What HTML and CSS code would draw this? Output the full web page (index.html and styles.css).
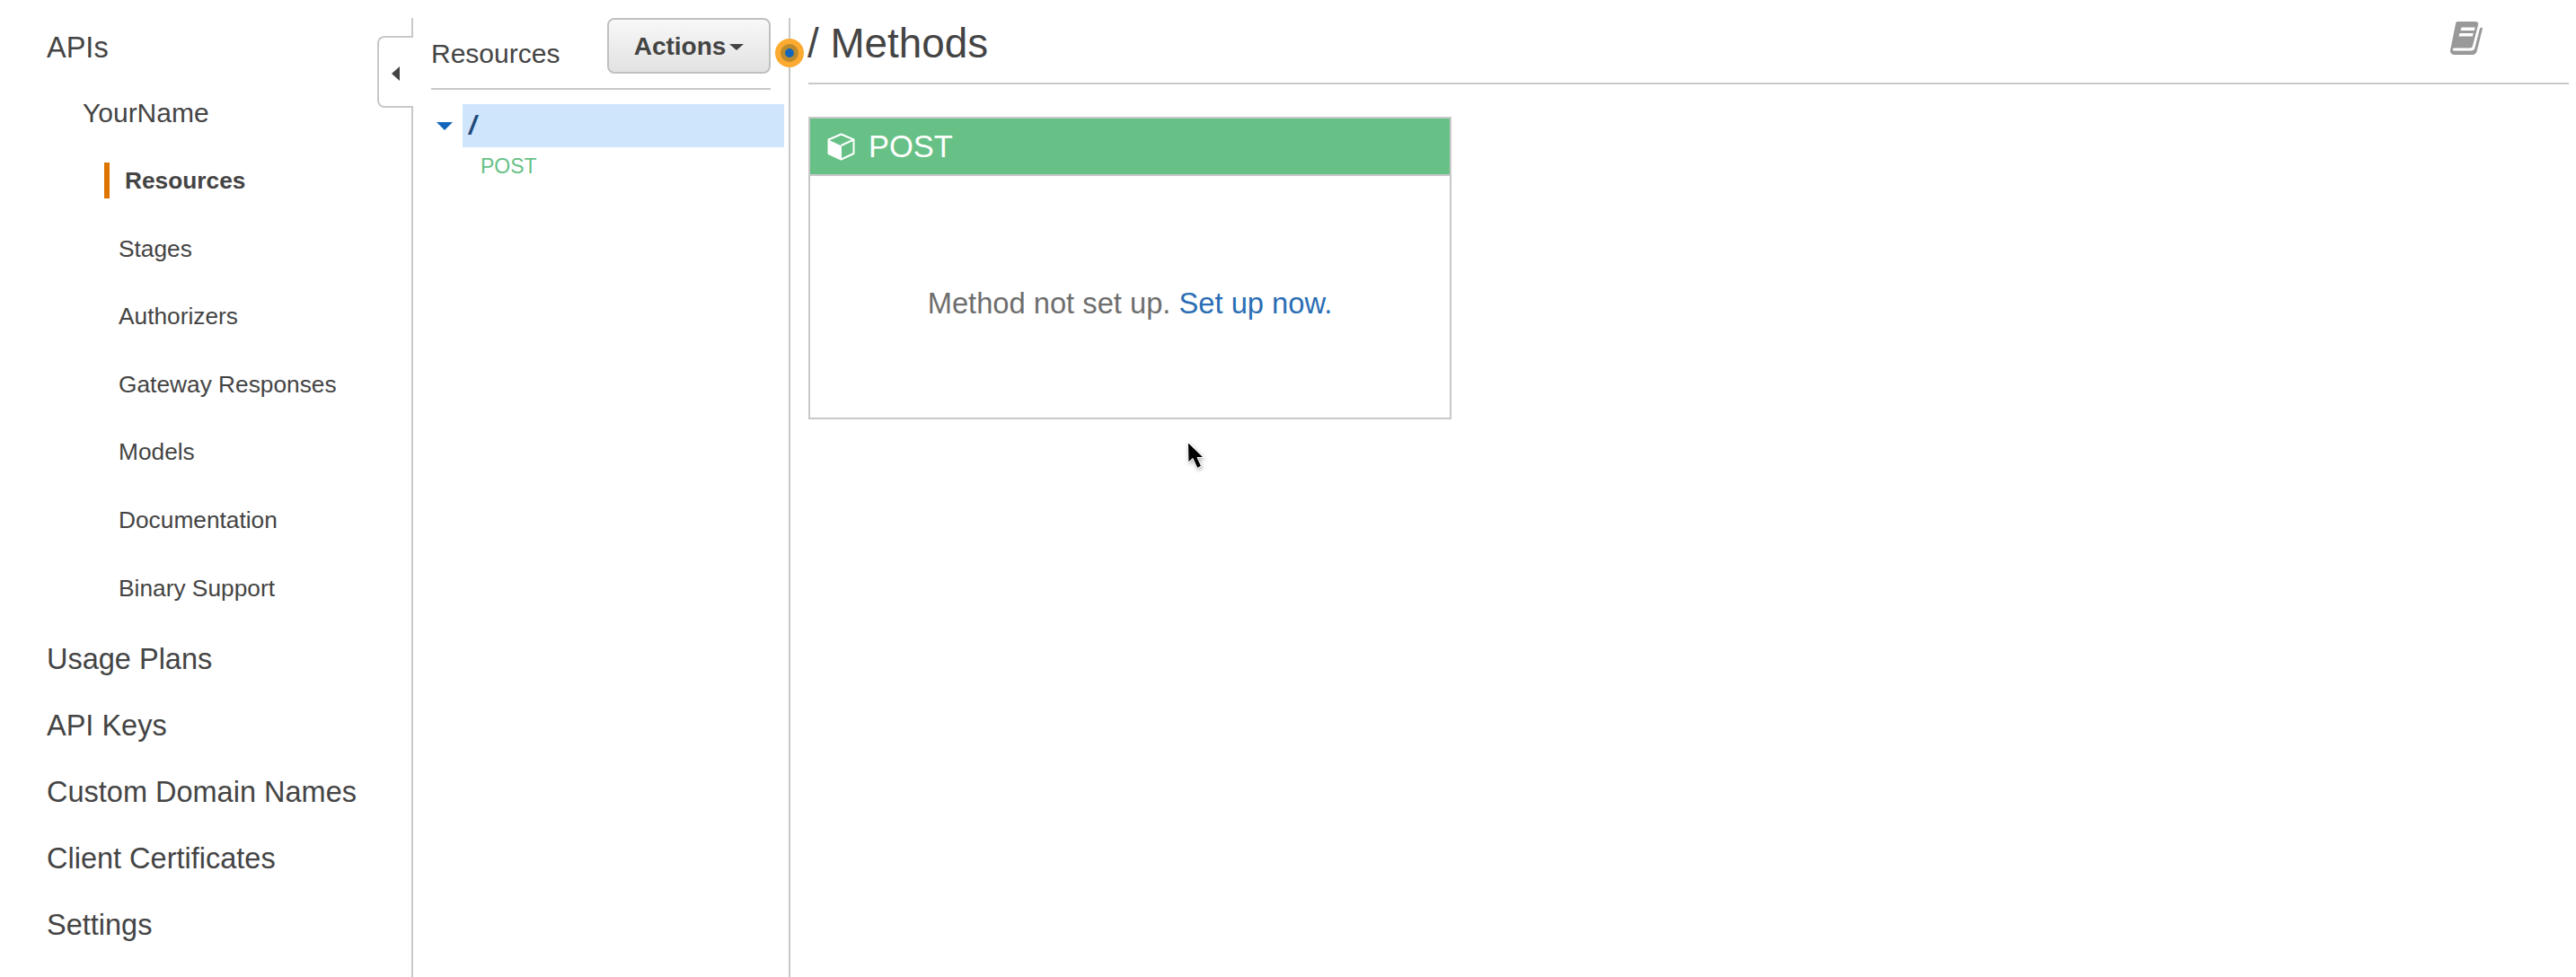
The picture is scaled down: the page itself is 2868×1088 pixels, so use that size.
FILE: index.html
```html
<!DOCTYPE html>
<html>
<head>
<title>Resources</title>
<meta charset="utf-8">
<link rel="stylesheet" href="styles.css">
</head>
<body>

<div class="page">

	<!-- left nav -->
	<nav class="nav">
		<a class="top first">APIs</a>
		<a class="api">YourName</a>
		<ul class="sub">
			<li class="active">Resources</li>
			<li>Stages</li>
			<li>Authorizers</li>
			<li>Gateway Responses</li>
			<li>Models</li>
			<li>Documentation</li>
			<li>Binary Support</li>
		</ul>
		<a class="top">Usage Plans</a>
		<a class="top">API Keys</a>
		<a class="top">Custom Domain Names</a>
		<a class="top">Client Certificates</a>
		<a class="top">Settings</a>
		<div class="toggle"><span class="arrow-left"></span></div>
	</nav>

	<!-- resource tree -->
	<section class="tree">
		<div class="tree-head">
			<span class="tree-title">Resources</span>
			<button class="actions">Actions<span class="caret"></span></button>
		</div>
		<div class="tree-row">
			<span class="arrow-down"></span>
			<span class="tree-path">/</span>
		</div>
		<div class="tree-method">POST</div>
		<div class="drag"><span></span></div>
	</section>

	<!-- methods -->
	<main class="main">
		<div class="main-head">
			<h1>/ Methods</h1>
			<svg class="book" width="42" height="40" viewBox="0 0 42 40">
				<path fill="#999" d="M9 1h20c2.500 0 3.500 1.500 3 4l-6 23c-.5 1.800-1.500 2.500-3.500 2.500H6c-2 0-3 1.500-2 2.500.5.500 1.500.500 2.500.500h18c2 0 3.200-1 3.800-3L34 8.500c.4-.4 1.500-.6 2.500-.8.400 0 .6.300.5.800l-6.200 25c-.6 2.500-2.300 4.500-5.300 4.500H6c-3.500 0-5.500-2.500-5-5.500.1-.8.300-1.500.6-2.300L7 3.500C7.300 2 8 1 9 1z"/>
				<path fill="#fff" d="M13.500 7.500h15.200l-1 3.500H12.500zM11.500 14h15.200l-1 3.500H10.500z"/>
			</svg>
		</div>
		<div class="card">
			<div class="card-head">
				<svg class="cube" width="31" height="31" viewBox="0 0 31 31">
					<path fill="none" stroke="#fff" stroke-width="2" stroke-linejoin="round" d="M15.500 1.500 29.500 7.500v15.500L15.500 29.500 1.500 23V7.500zM15.500 14 29.500 7.500"/>
					<path fill="#fff" d="M1 7.500 16 14.500V30L1 23z"/>
				</svg>
				POST
			</div>
			<div class="card-body">Method not set up. <a>Set up now.</a></div>
		</div>
	</main>
</div>

<svg class="cursor" width="22" height="32" viewBox="0 0 22 32">
	<path fill="#000" stroke="#fff" stroke-width="1" d="M1.500 1.500 2 24l5-4.500L12 30.500l4.500-2.500-4.500-9.500h7z"/>
</svg>

</body>
</html>
```

FILE: styles.css
```css
* {
	box-sizing: border-box;
}

html, body {
	margin: 0;
	height: 100%;
	overflow: hidden;
	background-color: #fff;
}

body {
	font-family: "Liberation Sans", Arial, sans-serif;
	color: #444;
}

.page {
	display: flex;
	height: 1068px;
	margin-top: 20px;
}

/*******left nav**********/
.nav {
	position: relative;
	display: flex;
	flex-direction: column;
	width: 460px;
	padding-top: 13px;
	padding-left: 52px;
	border-right: 2px #c8c8c8 solid;
	flex: none;
}

.nav .top {
	display: block;
	height: 40px;
	line-height: 40px;
	margin-bottom: 34px;
	font-size: 32.500px;
}

.nav .first {
	margin-bottom: 33px;
}

.nav .api {
	display: block;
	height: 40px;
	line-height: 40px;
	margin-left: 40px;
	font-size: 30px;
}

.sub {
	list-style: none;
	margin: 35px 0 39px 64px;
	padding: 0;
}

.sub li {
	height: 40px;
	line-height: 40px;
	margin-bottom: 35.600px;
	padding-left: 16px;
	font-size: 26.300px;
}

.sub li:last-child {
	margin-bottom: 0;
}

.sub .active {
	font-weight: bold;
	padding-left: 17px;
	border-left: 6px #dd7300 solid;
}

.toggle {
	position: absolute;
	top: 20px;
	right: -2px;
	width: 40px;
	height: 80px;
	background-color: #fff;
	border: 2px #c8c8c8 solid;
	border-right: none;
	border-radius: 8px 0 0 8px;
}

.arrow-left {
	position: absolute;
	left: 14px;
	top: 32px;
	border-top: 8px transparent solid;
	border-bottom: 8px transparent solid;
	border-right: 9px #444 solid;
}

/*******resource tree**********/
.tree {
	position: relative;
	width: 420px;
	padding-left: 20px;
	border-right: 2px #c8c8c8 solid;
	flex: none;
}

.tree-head {
	display: flex;
	justify-content: space-between;
	width: 378px;
	height: 80px;
	border-bottom: 2px #c8c8c8 solid;
}

.tree-title {
	margin-top: 22px;
	line-height: 36px;
	font-size: 30px;
}

.actions {
	display: flex;
	align-items: center;
	justify-content: center;
	width: 182px;
	height: 62px;
	padding: 2px 0 0;
	font-family: inherit;
	font-size: 28px;
	font-weight: bold;
	color: #444;
	background: linear-gradient(#f8f8f8, #e2e2e2);
	border: 2px #c0c0c0 solid;
	border-radius: 8px;
}

.caret {
	margin-left: 4px;
	border-left: 8px transparent solid;
	border-right: 8px transparent solid;
	border-top: 7px #444 solid;
}

.tree-row {
	display: flex;
	align-items: center;
	margin-top: 16px;
	height: 48px;
}

.arrow-down {
	margin-left: 6px;
	margin-right: 11px;
	border-left: 9px transparent solid;
	border-right: 9px transparent solid;
	border-top: 9px #1166bb solid;
}

.tree-path {
	display: block;
	width: 358px;
	height: 48px;
	line-height: 48px;
	padding-left: 7px;
	font-size: 30px;
	font-weight: bold;
	font-style: italic;
	color: #1f4a7a;
	background-color: #cfe5fc;
}

.tree-method {
	margin-top: 8px;
	margin-left: 55px;
	line-height: 26px;
	font-size: 23px;
	color: #67c186;
}

.drag {
	position: absolute;
	top: 23px;
	right: -17px;
	width: 32px;
	height: 32px;
	padding: 6px;
	background-color: #fcaa30;
	border-radius: 50%;
}

.drag span {
	display: block;
	width: 20px;
	height: 20px;
	background-color: #1166bb;
	border: 5px #bd8a2c solid;
	border-radius: 50%;
}

/*******methods**********/
.main {
	flex: 1;
	padding: 0 8px 0 20px;
}

.main-head {
	display: flex;
	align-items: flex-start;
	justify-content: space-between;
	height: 74px;
	border-bottom: 2px #c8c8c8 solid;
}

.main-head h1 {
	margin: 0 0 0 -1px;
	line-height: 58px;
	font-size: 45.800px;
	font-weight: normal;
}

.book {
	margin-top: 3px;
	margin-right: 91px;
}

.card {
	width: 716px;
	height: 337px;
	margin-top: 36px;
	border: 2px #c8c8c8 solid;
}

.card-head {
	display: flex;
	align-items: center;
	height: 64px;
	padding-left: 19px;
	font-size: 34.500px;
	color: #fff;
	background-color: #67c186;
	border-bottom: 2px #c8c8c8 solid;
}

.cube {
	margin-right: 15px;
}

.card-body {
	height: 269px;
	padding-top: 14px;
	line-height: 255px;
	text-align: center;
	font-size: 32.700px;
	color: #6e6e6e;
}

.card-body a {
	color: #2a6eb4;
}

.cursor {
	position: absolute;
	left: 1321px;
	top: 491px;
	filter: drop-shadow(1px 2px 2px rgba(0, 0, 0, 0.3));
}
```
